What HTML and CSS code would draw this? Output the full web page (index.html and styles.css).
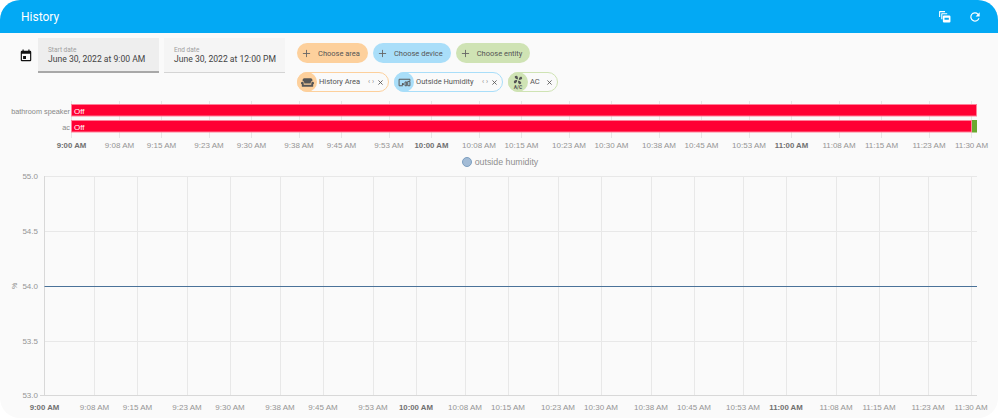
FILE: index.html
```html
<!DOCTYPE html>
<html lang="en">
<head>
<meta charset="utf-8">
<title>History</title>
<link rel="stylesheet" href="styles.css">
</head>
<body>
<div class="card">
  <header class="topbar">
    <div class="title">History</div>
    <div class="actions">
      <svg class="action copy" viewBox="0 0 24 24"><path fill="currentColor" d="M3 2h10v2H4v9H2V3a1 1 0 0 1 1-1zM7 6h10v2H8v9H6V7a1 1 0 0 1 1-1zM11 10h10a2 2 0 0 1 2 2v9a2 2 0 0 1-2 2H11a2 2 0 0 1-2-2v-9a2 2 0 0 1 2-2zm1 4.500v3.500h8v-3.500z"/></svg>
      <svg class="action" viewBox="0 0 24 24"><path fill="currentColor" d="M17.650 6.350A8 8 0 1 0 19.730 14h-2.080A6 6 0 1 1 12 6c1.660 0 3.140.690 4.220 1.780L13 11h7V4z"/></svg>
    </div>
  </header>
  <section class="filters">
    <svg class="cal" viewBox="0 0 24 24"><path fill="currentColor" d="M19 3h-1V1h-2v2H8V1H6v2H5a2 2 0 0 0-2 2v14a2 2 0 0 0 2 2h14a2 2 0 0 0 2-2V5a2 2 0 0 0-2-2zm0 16H5V8h14zM7 12h5v5H7z"/></svg>
    <div class="field active"><span class="field-label">Start date</span><span class="field-value">June 30, 2022 at 9:00 AM</span></div>
    <div class="field"><span class="field-label">End date</span><span class="field-value">June 30, 2022 at 12:00 PM</span></div>
    <div class="chips">
      <div class="chip-row">
        <div class="add orange"><svg class="plus" viewBox="0 0 10 10"><path d="M5 1V9M1 5H9"/></svg>Choose area</div>
        <div class="add blue"><svg class="plus" viewBox="0 0 10 10"><path d="M5 1V9M1 5H9"/></svg>Choose device</div>
        <div class="add green"><svg class="plus" viewBox="0 0 10 10"><path d="M5 1V9M1 5H9"/></svg>Choose entity</div>
      </div>
      <div class="chip-row">
        <div class="sel sel-orange">
          <span class="sel-icon orange"><svg viewBox="0 0 24 24"><path fill="currentColor" d="M6 4h12a3 3 0 0 1 3 3v2.100a3.500 3.500 0 0 0-3 3.400V14H6v-1.500a3.500 3.500 0 0 0-3-3.400V7a3 3 0 0 1 3-3zM2.500 10.500A2.500 2.500 0 0 1 5 13v3h14v-3a2.500 2.500 0 1 1 3.500 2.300V19a1 1 0 0 1-1 1h-19a1 1 0 0 1-1-1v-3.700a2.500 2.500 0 0 1 1-4.800z"/></svg></span>
          <span class="sel-text">History Area</span><span class="arrows">‹ ›</span><svg class="close" viewBox="0 0 10 10"><path d="M2 2L8 8M8 2L2 8"/></svg>
        </div>
        <div class="sel sel-blue">
          <span class="sel-icon blue"><svg viewBox="0 0 24 24"><path fill="none" stroke="currentColor" stroke-width="1.800" d="M9 18H2V6h20v3M13 11h3v7h-3zM18 10h4v8h-4z"/><circle cx="9" cy="15" r="2" fill="currentColor"/></svg></span>
          <span class="sel-text">Outside Humidity</span><span class="arrows">‹ ›</span><svg class="close" viewBox="0 0 10 10"><path d="M2 2L8 8M8 2L2 8"/></svg>
        </div>
        <div class="sel sel-green">
          <span class="sel-icon green ac"><svg viewBox="0 0 24 24"><path fill="currentColor" d="M12 10c0-4-1-8-4-8S3 4 5 7c1.500 2 4 3 7 3zm2 2c4 0 8-1 8-4s-2-5-5-3c-2 1.500-3 4-3 7zm-2 2c0 4 1 8 4 8s5-2 3-5c-1.500-2-4-3-7-3zm-2-2c-4 0-8 1-8 4s2 5 5 3c2-1.500 3-4 3-7z"/></svg><b class="ac-label">A/C</b></span>
          <span class="sel-text">AC</span><svg class="close" viewBox="0 0 10 10"><path d="M2 2L8 8M8 2L2 8"/></svg>
        </div>
      </div>
    </div>
  </section>
  <svg class="timeline" viewBox="0 0 998 54" width="998" height="54">
    <path class="tick-lines" d="M71.500 0V37M119.500 0V37M161.500 0V37M209.500 0V37M251.500 0V37M299.500 0V37M341.500 0V37M389.500 0V37M431.500 0V37M479.500 0V37M521.500 0V37M569.500 0V37M611.500 0V37M659.500 0V37M701.500 0V37M749.500 0V37M791.500 0V37M839.500 0V37M881.500 0V37M929.500 0V37M971.500 0V37"/>
    <text class="row-label" x="70" y="12.500" text-anchor="end">bathroom speaker</text>
    <text class="row-label" x="70" y="28.500" text-anchor="end">ac</text>
    <rect class="bar-off" x="71.500" y="3.500" width="905" height="11.500"/>
    <rect class="bar-off" x="71.500" y="19.500" width="900" height="11.500"/>
    <rect class="bar-on" x="972" y="19" width="5" height="12.500"/>
    <text class="bar-text" x="74" y="12.500">Off</text>
    <text class="bar-text" x="74" y="28.500">Off</text>
    <g class="tick-text" text-anchor="middle">
      <text class="major" x="71.500" y="47">9:00 AM</text><text x="119.500" y="47">9:08 AM</text><text x="161.500" y="47">9:15 AM</text><text x="209" y="47">9:23 AM</text><text x="251.500" y="47">9:30 AM</text><text x="299" y="47">9:38 AM</text><text x="341.500" y="47">9:45 AM</text><text x="389" y="47">9:53 AM</text><text class="major" x="431.500" y="47">10:00 AM</text><text x="479" y="47">10:08 AM</text><text x="521.500" y="47">10:15 AM</text><text x="569" y="47">10:23 AM</text><text x="611.500" y="47">10:30 AM</text><text x="659" y="47">10:38 AM</text><text x="701.500" y="47">10:45 AM</text><text x="749" y="47">10:53 AM</text><text class="major" x="791.500" y="47">11:00 AM</text><text x="839" y="47">11:08 AM</text><text x="881.500" y="47">11:15 AM</text><text x="929" y="47">11:23 AM</text><text x="971.500" y="47">11:30 AM</text>
    </g>
  </svg>
  <div class="legend"><span class="dot"></span>outside humidity</div>
  <svg class="linechart" viewBox="0 0 998 248" width="998" height="248">
    <path class="grid" d="M44.500 6.500H977M44.500 61.500H977M44.500 116.500H977M44.500 171.500H977M94.500 6.500V225M137.500 6.500V225M187.500 6.500V225M230.500 6.500V225M280.500 6.500V225M323.500 6.500V225M373.500 6.500V225M416.500 6.500V225M465.500 6.500V225M508.500 6.500V225M558.500 6.500V225M601.500 6.500V225M651.500 6.500V225M694.500 6.500V225M743.500 6.500V225M786.500 6.500V225M836.500 6.500V225M879.500 6.500V225M928.500 6.500V225M971.500 6.500V225"/>
    <path class="axis" d="M44.500 6V226M40 225.500H977"/>
    <path class="series" d="M44.500 116.500H977"/>
    <g class="tick-text" text-anchor="end">
      <text x="38" y="9">55.0</text><text x="38" y="64">54.5</text><text x="38" y="119">54.0</text><text x="38" y="174">53.5</text><text x="38" y="228">53.0</text>
    </g>
    <text class="unit" transform="translate(17 116) rotate(-90)" text-anchor="middle">%</text>
    <g class="tick-text" text-anchor="middle">
      <text class="major" x="44.500" y="240">9:00 AM</text><text x="94.500" y="240">9:08 AM</text><text x="137.500" y="240">9:15 AM</text><text x="187" y="240">9:23 AM</text><text x="230" y="240">9:30 AM</text><text x="280" y="240">9:38 AM</text><text x="323" y="240">9:45 AM</text><text x="373" y="240">9:53 AM</text><text class="major" x="416" y="240">10:00 AM</text><text x="465" y="240">10:08 AM</text><text x="508" y="240">10:15 AM</text><text x="558" y="240">10:23 AM</text><text x="601" y="240">10:30 AM</text><text x="651" y="240">10:38 AM</text><text x="694" y="240">10:45 AM</text><text x="743" y="240">10:53 AM</text><text class="major" x="786" y="240">11:00 AM</text><text x="836" y="240">11:08 AM</text><text x="879" y="240">11:15 AM</text><text x="928" y="240">11:23 AM</text><text x="971" y="240">11:30 AM</text>
    </g>
  </svg>
</div>
</body>
</html>
```
FILE: styles.css
```css
* { box-sizing: border-box; }
html, body { margin: 0; padding: 0; background: #fff; }
body { width: 1000px; height: 420px; overflow: hidden; font-family: Roboto, "Liberation Sans", sans-serif; }
.card { width: 998px; height: 418px; background: #fafafa; border-radius: 20px; overflow: hidden; }
.topbar { height: 33px; background: #03a9f4; color: #fff; display: flex; align-items: center; justify-content: space-between; padding: 0 16px 0 21px; }
.title { font-size: 12px; }
.actions { display: flex; gap: 17px; align-items: center; }
.action { width: 14px; height: 14px; display: block; }
.copy { width: 13px; height: 13px; }
.filters { display: flex; align-items: flex-start; height: 68px; padding: 5px 0 0 19px; color: #212121; }
.cal { width: 14px; height: 14px; margin: 11px 5px 0 0; color: #111; flex: none; }
.field { width: 121px; height: 35px; margin-right: 5px; background: #f5f5f5; border-bottom: 1px solid #d4d4d4; padding: 8px 0 0 10px; display: flex; flex-direction: column; }
.field.active { background: #eee; border-bottom: 2px solid #a8a8a8; }
.field-label { font-size: 6.500px; line-height: 8px; color: #a0a0a0; }
.field-value { font-size: 8.600px; line-height: 11px; color: #444; }
.chips { margin-left: 7px; padding-top: 5px; display: flex; flex-direction: column; gap: 9px; }
.chip-row { display: flex; gap: 5px; }
.add { height: 20px; border-radius: 10px; display: flex; align-items: center; font-size: 7.500px; color: #555; padding: 0 8px 0 5px; }
.plus { width: 9px; height: 9px; margin-right: 7px; flex: none; }
.plus path { stroke: #666; stroke-width: 1; fill: none; }
.orange { background: #fdd09c; }
.blue { background: #a9def9; }
.green { background: #cfe3b4; }
.sel { height: 20px; border-radius: 10px; border: 1px solid; display: flex; align-items: center; font-size: 7.500px; color: #555; background: #fafafa; }
.sel-orange { border-color: #fdd09c; width: 92px; }
.sel-blue { border-color: #a9def9; width: 109px; }
.sel-green { border-color: #cfe3b4; width: 50px; }
.sel-icon { width: 20px; height: 20px; margin: -1px 0 -1px -1px; border-radius: 50%; display: flex; align-items: center; justify-content: center; flex-direction: column; color: #555; flex: none; }
.sel-icon svg { width: 13px; height: 13px; display: block; }
.ac svg { width: 10px; height: 10px; }
.ac-label { font-size: 5px; line-height: 5px; }
.sel-text { margin-left: 2px; padding-bottom: 1px; flex: 1; white-space: nowrap; }
.arrows { font-size: 7px; color: #888; margin-right: 3px; }
.close { width: 7px; height: 7px; margin-right: 4px; flex: none; }
.close path { stroke: #555; stroke-width: 1.200; fill: none; }
svg text { font-family: "Liberation Sans", Arial, sans-serif; }
.timeline, .linechart { display: block; }
.tick-lines { stroke: #e6e6e6; fill: none; }
.row-label { font-size: 7.300px; fill: #888; }
.bar-off { fill: #ff0033; stroke: #ff8098; stroke-width: 1; }
.bar-on { fill: #6aa92f; }
.bar-text { font-size: 8px; fill: #fff; }
.tick-text text { font-size: 8px; fill: #959595; }
.tick-text text.major { font-size: 7.800px; font-weight: 700; fill: #707070; }
.legend { height: 14px; margin-bottom: 1px; display: flex; align-items: center; justify-content: center; font-size: 8.800px; font-family: "Liberation Sans", sans-serif; color: #8f8f8f; gap: 3px; padding-left: 2px; }
.dot { width: 10px; height: 10px; border-radius: 50%; background: #a3bcd6; border: 1px solid #7d9fc0; }
.grid { stroke: #e8e8e8; fill: none; }
.axis { stroke: #d8d8d8; fill: none; }
.series { stroke: #4a7299; fill: none; stroke-width: 1; }
.unit { font-size: 7px; fill: #8a8a8a; }
```
